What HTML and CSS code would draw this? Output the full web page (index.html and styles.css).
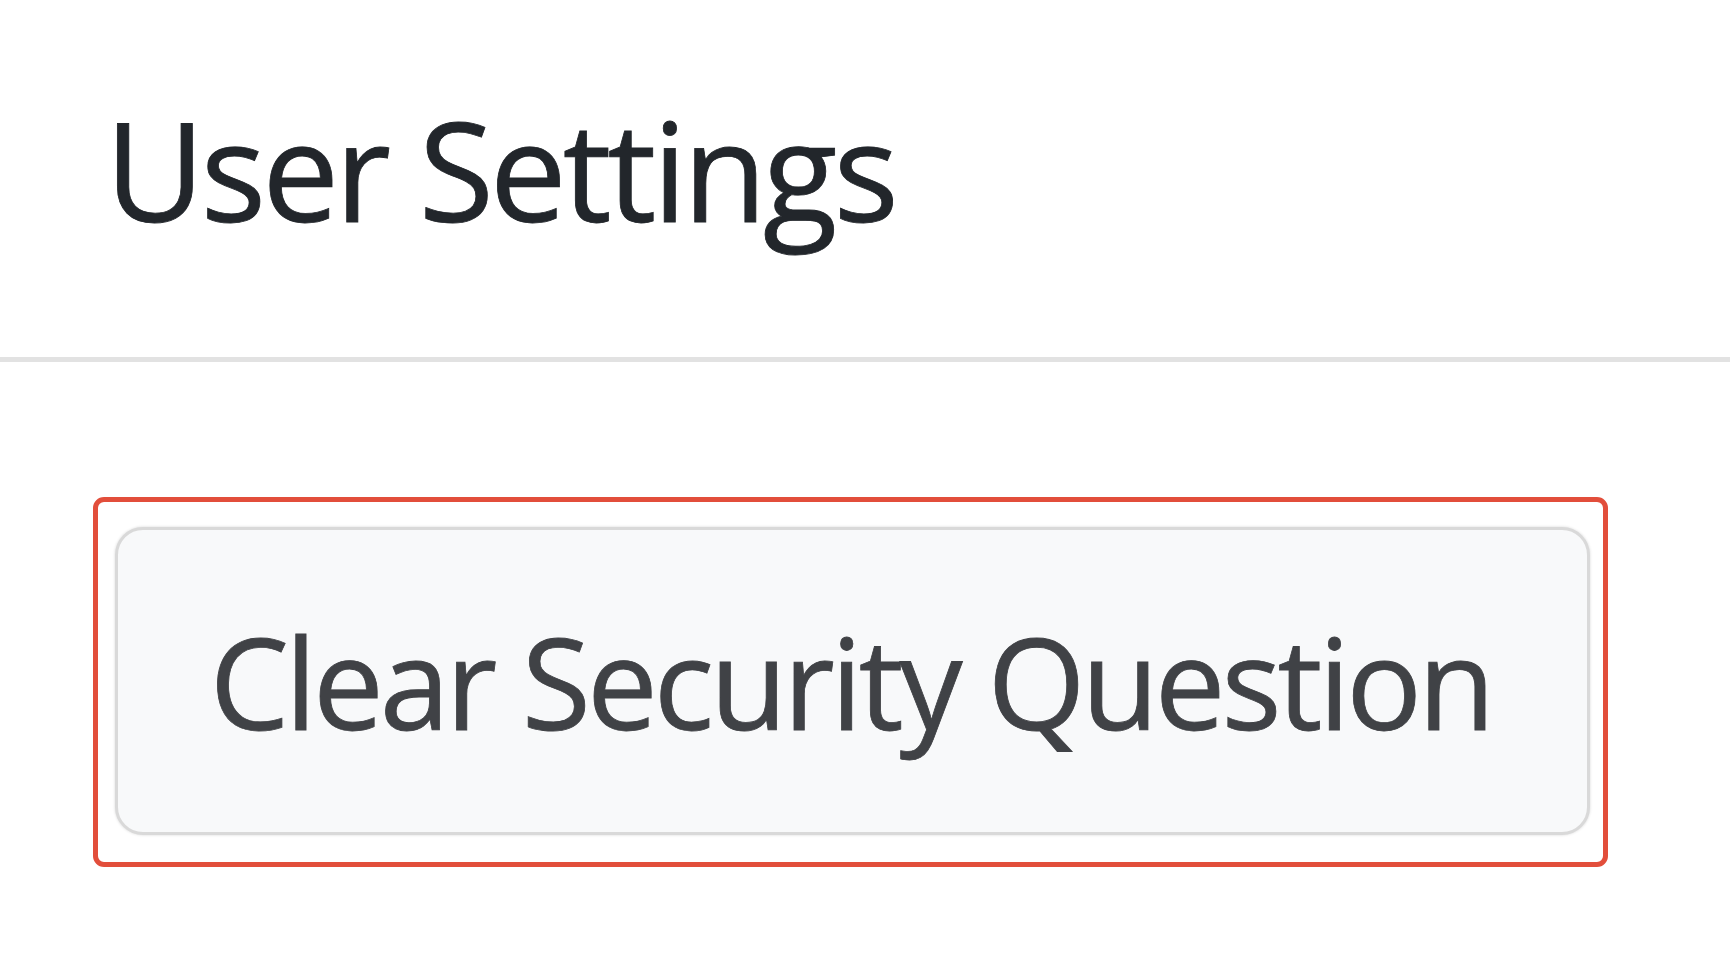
FILE: index.html
```html
<!DOCTYPE html>
<html lang="en">
<head>
<meta charset="utf-8">
<title>User Settings</title>
<link rel="stylesheet" href="styles.css">
</head>
<body>
<header class="page-header">
  <h1 class="page-title">User Settings</h1>
</header>
<main class="content">
  <div class="highlight-box">
    <button class="btn-clear" type="button">Clear Security Question</button>
  </div>
</main>
</body>
</html>
```

FILE: styles.css
```css
html, body {
  margin: 0;
  padding: 0;
  background: #ffffff;
}

body {
  width: 1730px;
  height: 975px;
  overflow: hidden;
  font-family: "Open Sans", "Noto Sans", sans-serif;
}

.page-header {
  height: 357px;
  border-bottom: 5px solid #e2e2e2;
  box-sizing: content-box;
  padding-left: 105px;
  display: flex;
  align-items: flex-start;
}

.page-title {
  margin: 0;
  padding-top: 101px;
  font-size: 137px;
  line-height: 1;
  font-weight: 400;
  letter-spacing: -4px;
  color: #22262b;
  -webkit-text-stroke: 0.8px #22262b;
}

.content {
  padding-top: 135px;
  padding-left: 93px;
}

.highlight-box {
  width: 1515px;
  height: 370px;
  box-sizing: border-box;
  border: 5px solid #e24e3b;
  border-radius: 11px;
  padding: 25px 13px 27px 17px;
  display: flex;
}

.btn-clear {
  flex: 1;
  margin: 0;
  background: #f8f9fa;
  border: 3px solid #d9d9d9;
  border-radius: 28px;
  box-shadow: 0 0 3px rgba(0, 0, 0, 0.16);
  font-family: "Open Sans", "Noto Sans", sans-serif;
  font-size: 126px;
  font-weight: 400;
  letter-spacing: -4px;
  color: #404246;
  -webkit-text-stroke: 0.8px #404246;
  padding: 0 4px 0 0;
  display: flex;
  align-items: center;
  justify-content: center;
  cursor: pointer;
}
```
